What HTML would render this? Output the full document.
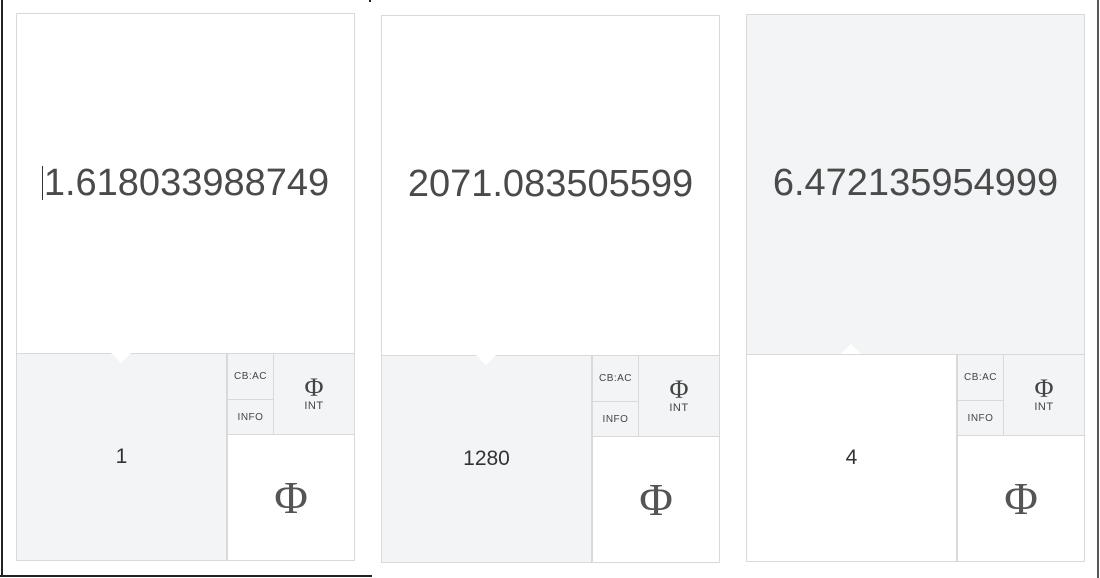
<!DOCTYPE html>
<html><head><style>
body{margin:0;width:1100px;height:578px;background:#fff;position:relative;overflow:hidden;font-family:"Liberation Sans",sans-serif;color:#444}
.p{position:absolute;width:339px;height:548px;border:1px solid #d9d9d9;box-sizing:border-box}
.top{position:absolute;left:0;top:0;width:337px;height:339px;display:flex;align-items:center;justify-content:center;font-size:38px;color:#4a4a4a;padding-bottom:2px;box-sizing:border-box}
.bl{position:absolute;left:0;top:339px;width:210px;height:207px;border-top:1px solid #d9d9d9;border-right:1px solid #d9d9d9;display:flex;align-items:center;justify-content:center;font-size:21px;color:#333;box-sizing:border-box}
.c{position:absolute;border-left:1px solid #d9d9d9;border-top:1px solid #d9d9d9;background:#f3f4f5;box-sizing:border-box;display:flex;align-items:center;justify-content:center;font-size:10px;color:#444;letter-spacing:0.5px}
.phi{font-family:"Liberation Serif",serif;letter-spacing:0}
.g{background:#f3f4f5}.w{background:#fff}
</style></head><body>
<div style="position:absolute;left:1px;top:0;width:2px;height:577px;background:#222"></div>
<div style="position:absolute;left:0;top:575px;width:372px;height:2px;background:#222"></div>
<div style="position:absolute;left:369px;top:0;width:2px;height:2px;background:#222"></div>
<div style="position:absolute;left:1097px;top:0;width:2px;height:578px;background:#555"></div>

<div class="p" style="left:16px;top:13px">
<div class="top w"><span style="border-left:1px solid #333;padding-left:1px;line-height:34px">1.618033988749</span></div>
<div class="bl g">1</div>
<div style="position:absolute;left:94px;top:339px;width:0;height:0;border-left:10px solid transparent;border-right:10px solid transparent;border-top:10px solid #fff"></div>
<div class="c" style="left:210px;top:339px;width:46px;height:46px">CB:AC</div>
<div class="c" style="left:210px;top:385px;width:46px;height:35px">INFO</div>
<div class="c" style="left:256px;top:339px;width:81px;height:81px;flex-direction:column"><span class="phi" style="font-size:26px;line-height:24px">Φ</span><span style="font-size:11px">INT</span></div>
<div class="c w" style="left:210px;top:420px;width:127px;height:126px"><span class="phi" style="font-size:46px;color:#555">Φ</span></div>
</div>

<div class="p" style="left:381px;top:15px">
<div class="top w">2071.083505599</div>
<div class="bl g">1280</div>
<div style="position:absolute;left:94px;top:339px;width:0;height:0;border-left:10px solid transparent;border-right:10px solid transparent;border-top:10px solid #fff"></div>
<div class="c" style="left:210px;top:339px;width:46px;height:46px">CB:AC</div>
<div class="c" style="left:210px;top:385px;width:46px;height:35px">INFO</div>
<div class="c" style="left:256px;top:339px;width:81px;height:81px;flex-direction:column"><span class="phi" style="font-size:26px;line-height:24px">Φ</span><span style="font-size:11px">INT</span></div>
<div class="c w" style="left:210px;top:420px;width:127px;height:126px"><span class="phi" style="font-size:46px;color:#555">Φ</span></div>
</div>

<div class="p" style="left:746px;top:14px">
<div class="top g">6.472135954999</div>
<div class="bl w">4</div>
<div style="position:absolute;left:94px;top:329px;width:0;height:0;border-left:10px solid transparent;border-right:10px solid transparent;border-bottom:10px solid #fff"></div>
<div class="c" style="left:210px;top:339px;width:46px;height:46px">CB:AC</div>
<div class="c" style="left:210px;top:385px;width:46px;height:35px">INFO</div>
<div class="c" style="left:256px;top:339px;width:81px;height:81px;flex-direction:column"><span class="phi" style="font-size:26px;line-height:24px">Φ</span><span style="font-size:11px">INT</span></div>
<div class="c w" style="left:210px;top:420px;width:127px;height:126px"><span class="phi" style="font-size:46px;color:#555">Φ</span></div>
</div>
</body></html>
